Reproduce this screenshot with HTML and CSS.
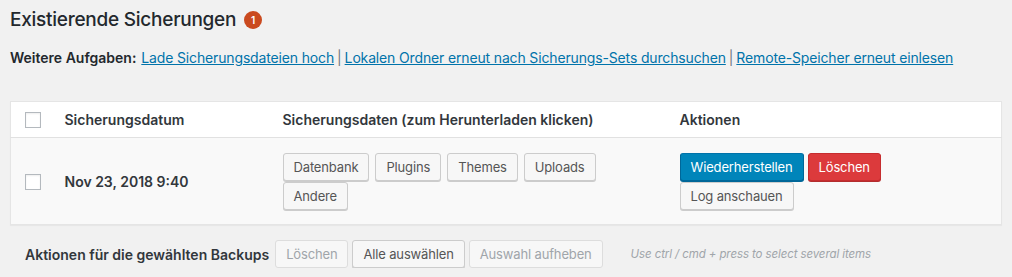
FILE: index.html
```html
<!DOCTYPE html>
<html lang="de">
<head>
    <meta charset="UTF-8">
    <meta name="viewport" content="width=device-width, initial-scale=1.0">
    <title>Existierende Sicherungen</title>
    <link rel="stylesheet" href="styles.css">
</head>
<body>
    <h2 class="title">Existierende Sicherungen <span class="badge">1</span></h2>

    <p class="tasks">
        <strong>Weitere Aufgaben:</strong>
        <a href="#">Lade Sicherungsdateien hoch</a> |
        <a href="#">Lokalen Ordner erneut nach Sicherungs-Sets durchsuchen</a> |
        <a href="#">Remote-Speicher erneut einlesen</a>
    </p>

    <table class="backups">
        <colgroup>
            <col class="col-check">
            <col class="col-date">
            <col class="col-data">
            <col>
        </colgroup>
        <thead>
            <tr>
                <th class="check"><span class="checkbox"></span></th>
                <th>Sicherungsdatum</th>
                <th>Sicherungsdaten (zum Herunterladen klicken)</th>
                <th>Aktionen</th>
            </tr>
        </thead>
        <tbody>
            <tr>
                <td class="check"><span class="checkbox"></span></td>
                <td class="date">Nov 23, 2018 9:40</td>
                <td>
                    <div class="btn-group data-buttons">
                        <button class="btn">Datenbank</button>
                        <button class="btn">Plugins</button>
                        <button class="btn">Themes</button>
                        <button class="btn">Uploads</button>
                        <button class="btn">Andere</button>
                    </div>
                </td>
                <td>
                    <div class="btn-group action-buttons">
                        <button class="btn btn-primary">Wiederherstellen</button>
                        <button class="btn btn-danger">Löschen</button>
                        <button class="btn">Log anschauen</button>
                    </div>
                </td>
            </tr>
        </tbody>
    </table>

    <div class="bulk">
        <strong>Aktionen für die gewählten Backups</strong>
        <button class="btn" disabled>Löschen</button>
        <button class="btn">Alle auswählen</button>
        <button class="btn" disabled>Auswahl aufheben</button>
        <em class="hint">Use ctrl / cmd + press to select several items</em>
    </div>
</body>
</html>
```

FILE: styles.css
```css
body {
    margin: 0;
    padding: 0 10px;
    background-color: #f1f1f1;
    font-family: Inter, "Noto Sans", sans-serif;
    font-size: 14px;
    color: #23282d;
}

.title {
    display: flex;
    align-items: center;
    gap: 8px;
    margin: 8px 0 0;
    height: 23px;
    font-size: 19px;
    font-weight: 500;
    letter-spacing: -0.25px;
}

.badge {
    display: inline-flex;
    align-items: center;
    justify-content: center;
    width: 18px;
    height: 18px;
    border-radius: 50%;
    background-color: #ca4a1f;
    color: #fff;
    font-size: 10px;
    font-weight: 600;
    letter-spacing: 0;
}

.tasks {
    margin: 17px 0 0;
    line-height: 20px;
    color: #72777c;
    word-spacing: -1px;
}

.tasks strong {
    margin-right: 2px;
    color: #23282d;
    font-weight: 600;
    word-spacing: 0;
}

.tasks a {
    color: #0073aa;
    letter-spacing: -0.15px;
    word-spacing: 0;
}

.backups {
    width: 100%;
    margin-top: 33px;
    border-collapse: collapse;
    table-layout: fixed;
    background-color: #fff;
    border: 1px solid #e5e5e5;
    box-shadow: 0 1px 1px rgba(0,0,0,0.04);
}

.col-check { width: 54px; }
.col-date { width: 218px; }
.col-data { width: 397px; }

.backups th {
    height: 35px;
    padding: 0;
    text-align: left;
    font-weight: 600;
    color: #32373c;
    border-bottom: 1px solid #e1e1e1;
}

.backups td {
    padding: 15px 0 14px;
    background-color: #f9f9f9;
    vertical-align: middle;
}

.backups .check {
    padding-left: 14px;
}

.checkbox {
    display: block;
    width: 14px;
    height: 14px;
    border: 1px solid #b4b9be;
    background-color: #fff;
    box-shadow: inset 0 1px 2px rgba(0,0,0,0.07);
}

.date {
    font-weight: 600;
    color: #32373c;
}

.btn-group {
    display: flex;
    flex-wrap: wrap;
    gap: 1px 6px;
}

.data-buttons { width: 330px; }
.action-buttons { width: 210px; gap: 1px 4px; }

.btn {
    height: 28px;
    padding: 0 10px 1px;
    font-family: inherit;
    font-size: 13px;
    line-height: 26px;
    letter-spacing: -0.15px;
    color: #555;
    background-color: #f7f7f7;
    border: 1px solid #ccc;
    border-radius: 3px;
    box-shadow: 0 1px 0 #ccc;
    cursor: pointer;
}

.btn-primary {
    color: #fff;
    background-color: #0085ba;
    border-color: #0073aa #006799 #006799;
    box-shadow: 0 1px 0 #006799;
}

.btn-danger {
    color: #fff;
    background-color: #dc3a3c;
    border-color: #c62d2f;
    box-shadow: 0 1px 0 #b32d2e;
}

.btn:disabled {
    color: #a0a5aa;
    border-color: #ddd;
    box-shadow: none;
    cursor: default;
}

.bulk {
    display: flex;
    align-items: center;
    gap: 4px;
    margin-top: 15px;
    padding-left: 15px;
}

.bulk strong {
    margin-right: 2px;
    font-weight: 600;
    color: #32373c;
}

.hint {
    margin-left: 24px;
    font-size: 11.5px;
    letter-spacing: -0.1px;
    color: #a0a5aa;
}
```
